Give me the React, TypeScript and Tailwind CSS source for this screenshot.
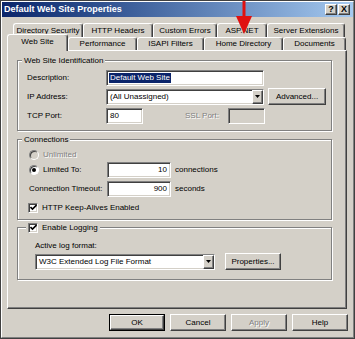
import type { ReactNode } from "react";

const raised =
  "bg-[#d4d0c8] border border-t-white border-l-white border-r-[#404040] border-b-[#404040] shadow-[inset_-1px_-1px_0_#808080]";
const sunken =
  "border border-t-[#808080] border-l-[#808080] border-r-white border-b-white shadow-[inset_1px_1px_0_#404040,inset_-1px_-1px_0_#d4d0c8]";
const disabledText = "text-[#808080] [text-shadow:1px_1px_0_#fff]";

function Group({ legend, className, legendClass, children }: {
  legend: ReactNode,
  className: string,
  legendClass: string,
  children: ReactNode,
}) {
  return (
    <div className={`relative border border-[#808080] shadow-[inset_1px_1px_0_#fff,1px_1px_0_#fff] ${className}`}>
      <div className={`absolute -top-[6px] h-[11px] px-[2px] flex items-center gap-[4px] bg-[#d4d0c8] ${legendClass}`}>
        {legend}
      </div>
      {children}
    </div>
  );
}

function Checkbox() {
  return (
    <span className={`w-[10px] h-[10px] bg-white flex items-center justify-center ${sunken}`}>
      <svg width="7" height="7" viewBox="0 0 7 7">
        <path d="M0.5 3 L2.5 5 L6.5 1" stroke="#000" strokeWidth="1.6" fill="none" />
      </svg>
    </span>
  );
}

function Radio({ checked, disabled }: { checked?: boolean, disabled?: boolean }) {
  return (
    <span
      className={`w-[10px] h-[10px] rounded-full flex items-center justify-center border border-t-[#808080] border-l-[#808080] border-r-white border-b-white shadow-[inset_1px_1px_0_#404040] ${disabled ? "bg-[#d4d0c8]" : "bg-white"}`}
    >
      {checked && <span className="w-[4px] h-[4px] rounded-full bg-black" />}
    </span>
  );
}

function DropArrow() {
  return (
    <span className={`ml-auto w-[11px] h-full flex items-center justify-center ${raised}`}>
      <svg width="5" height="3" viewBox="0 0 5 3">
        <polygon points="0,0 5,0 2.5,3" fill="#000" />
      </svg>
    </span>
  );
}

export default function App() {
  return (
    <div className="relative w-[355px] h-[339px] bg-[#d4d0c8] border border-[#404040] font-['Liberation_Sans',Arial,sans-serif] text-[8px] leading-[10px] text-black overflow-hidden">
      <div className="h-full flex flex-col border border-t-white border-l-white border-r-[#808080] border-b-[#808080]">
        {/* title bar */}
        <div className="h-[15px] shrink-0 flex items-center pl-[2px] pr-[3px] bg-linear-to-r from-[#0a246a] to-[#a6caf0]">
          <span className="text-white font-bold text-[9px] leading-[11px]">Default Web Site Properties</span>
          <div className="ml-auto flex gap-[1px]">
            <span className={`w-[12px] h-[11px] flex items-center justify-center font-bold text-[9px] leading-[9px] ${raised}`}>?</span>
            <span className={`w-[12px] h-[11px] flex items-center justify-center font-bold text-[9px] leading-[9px] ${raised}`}>X</span>
          </div>
        </div>

        {/* tabs, back row */}
        <div className="mt-[6px] h-[14px] shrink-0 flex pl-[11px]">
          <div className="w-[70px] flex items-center justify-center rounded-t-[3px] border-t border-l border-r border-t-white border-l-white border-r-[#404040] shadow-[inset_-1px_0_0_#808080]">Directory Security</div>
          <div className="w-[70px] flex items-center justify-center rounded-t-[3px] border-t border-l border-r border-t-white border-l-white border-r-[#404040] shadow-[inset_-1px_0_0_#808080]">HTTP Headers</div>
          <div className="w-[64px] flex items-center justify-center rounded-t-[3px] border-t border-l border-r border-t-white border-l-white border-r-[#404040] shadow-[inset_-1px_0_0_#808080]">Custom Errors</div>
          <div className="w-[50px] flex items-center justify-center rounded-t-[3px] border-t border-l border-r border-t-white border-l-white border-r-[#404040] shadow-[inset_-1px_0_0_#808080]">ASP.NET</div>
          <div className="w-[78px] flex items-center justify-center rounded-t-[3px] border-t border-l border-r border-t-white border-l-white border-r-[#404040] shadow-[inset_-1px_0_0_#808080]">Server Extensions</div>
        </div>

        {/* tabs, front row */}
        <div className="h-[13px] shrink-0 flex items-end pl-[5px]">
          <div className="relative z-10 w-[61px] h-[17px] -mb-[1px] pb-[2px] flex items-center justify-center bg-[#d4d0c8] rounded-t-[3px] border-t border-l border-r border-t-white border-l-white border-r-[#404040] shadow-[inset_-1px_0_0_#808080]">Web Site</div>
          <div className="w-[69px] h-[13px] flex items-center justify-center rounded-t-[3px] border-t border-l border-r border-t-white border-l-white border-r-[#404040] shadow-[inset_-1px_0_0_#808080]">Performance</div>
          <div className="w-[67px] h-[13px] flex items-center justify-center rounded-t-[3px] border-t border-l border-r border-t-white border-l-white border-r-[#404040] shadow-[inset_-1px_0_0_#808080]">ISAPI Filters</div>
          <div className="w-[79px] h-[13px] flex items-center justify-center rounded-t-[3px] border-t border-l border-r border-t-white border-l-white border-r-[#404040] shadow-[inset_-1px_0_0_#808080]">Home Directory</div>
          <div className="w-[63px] h-[13px] flex items-center justify-center rounded-t-[3px] border-t border-l border-r border-t-white border-l-white border-r-[#404040] shadow-[inset_-1px_0_0_#808080]">Documents</div>
        </div>

        {/* tab panel */}
        <div className="ml-[5px] w-[340px] h-[259px] shrink-0 flex flex-col pl-[9px] border border-t-white border-l-white border-r-[#404040] border-b-[#404040] shadow-[inset_-1px_-1px_0_#808080]">
          <Group
            className="mt-[9px] w-[315px] h-[71px] pt-[9px] pl-[9px]"
            legendClass="left-[4px]"
            legend={<span>Web Site Identification</span>}
          >
            <div className="h-[16px] flex items-center">
              <span className="w-[79px]">Description:</span>
              <div className={`w-[158px] h-[16px] bg-white flex items-center pl-[2px] ${sunken}`}>
                <span className="bg-[#0a246a] text-white px-[1px]">Default Web Site</span>
              </div>
            </div>
            <div className="mt-[2px] h-[17px] flex items-center">
              <span className="w-[79px]">IP Address:</span>
              <div className={`w-[158px] h-[16px] bg-white flex items-center pl-[3px] ${sunken}`}>
                <span>(All Unassigned)</span>
                <DropArrow />
              </div>
              <button className={`ml-[4px] w-[58px] h-[17px] flex items-center justify-center ${raised}`}>Advanced...</button>
            </div>
            <div className="mt-[3px] h-[16px] flex items-center">
              <span className="w-[79px]">TCP Port:</span>
              <div className={`w-[37px] h-[16px] bg-white flex items-center pl-[3px] ${sunken}`}>80</div>
              <span className={`ml-[42px] w-[43px] ${disabledText}`}>SSL Port:</span>
              <div className={`w-[37px] h-[16px] bg-[#d4d0c8] ${sunken}`} />
            </div>
          </Group>

          <Group
            className="mt-[8px] w-[315px] h-[81px] pt-[8px] pl-[11px]"
            legendClass="left-[4px]"
            legend={<span>Connections</span>}
          >
            <div className="h-[13px] flex items-center gap-[4px]">
              <Radio disabled />
              <span className={disabledText}>Unlimited</span>
            </div>
            <div className="mt-[1px] h-[16px] flex items-center">
              <div className="w-[78px] flex items-center gap-[4px]">
                <Radio checked />
                <span>Limited To:</span>
              </div>
              <div className={`w-[64px] h-[16px] bg-white flex items-center justify-end pr-[3px] ${sunken}`}>10</div>
              <span className="ml-[4px]">connections</span>
            </div>
            <div className="mt-[3px] h-[16px] flex items-center">
              <span className="w-[78px]">Connection Timeout:</span>
              <div className={`w-[64px] h-[16px] bg-white flex items-center justify-end pr-[3px] ${sunken}`}>900</div>
              <span className="ml-[4px]">seconds</span>
            </div>
            <div className="mt-[4px] -ml-[1px] h-[13px] flex items-center gap-[4px]">
              <Checkbox />
              <span>HTTP Keep-Alives Enabled</span>
            </div>
          </Group>

          <Group
            className="mt-[7px] w-[315px] h-[53px] pt-[13px] pl-[17px]"
            legendClass="left-[8px]"
            legend={<><Checkbox /><span>Enable Logging</span></>}
          >
            <div className="h-[10px] flex items-center">Active log format:</div>
            <div className="mt-[2px] h-[17px] flex items-center">
              <div className={`w-[180px] h-[16px] bg-white flex items-center pl-[3px] ${sunken}`}>
                <span>W3C Extended Log File Format</span>
                <DropArrow />
              </div>
              <button className={`ml-[10px] w-[56px] h-[17px] flex items-center justify-center ${raised}`}>Properties...</button>
            </div>
          </Group>
        </div>

        {/* dialog buttons */}
        <div className="mt-[5px] h-[17px] flex justify-end gap-[5px] pr-[5px]">
          <div className="w-[56px] h-[17px] border border-black">
            <button className={`w-full h-full flex items-center justify-center ${raised}`}>OK</button>
          </div>
          <button className={`w-[56px] h-[17px] flex items-center justify-center ${raised}`}>Cancel</button>
          <button className={`w-[56px] h-[17px] flex items-center justify-center ${raised} ${disabledText}`}>Apply</button>
          <button className={`w-[56px] h-[17px] flex items-center justify-center ${raised}`}>Help</button>
        </div>
      </div>

      {/* red annotation arrow */}
      <svg className="absolute left-[234px] top-0" width="18" height="34" viewBox="0 0 18 34">
        <rect x="7.5" y="0" width="3" height="17" fill="#e01010" />
        <polygon points="1,15 17,15 9,33" fill="#e01010" />
      </svg>
    </div>
  );
}
